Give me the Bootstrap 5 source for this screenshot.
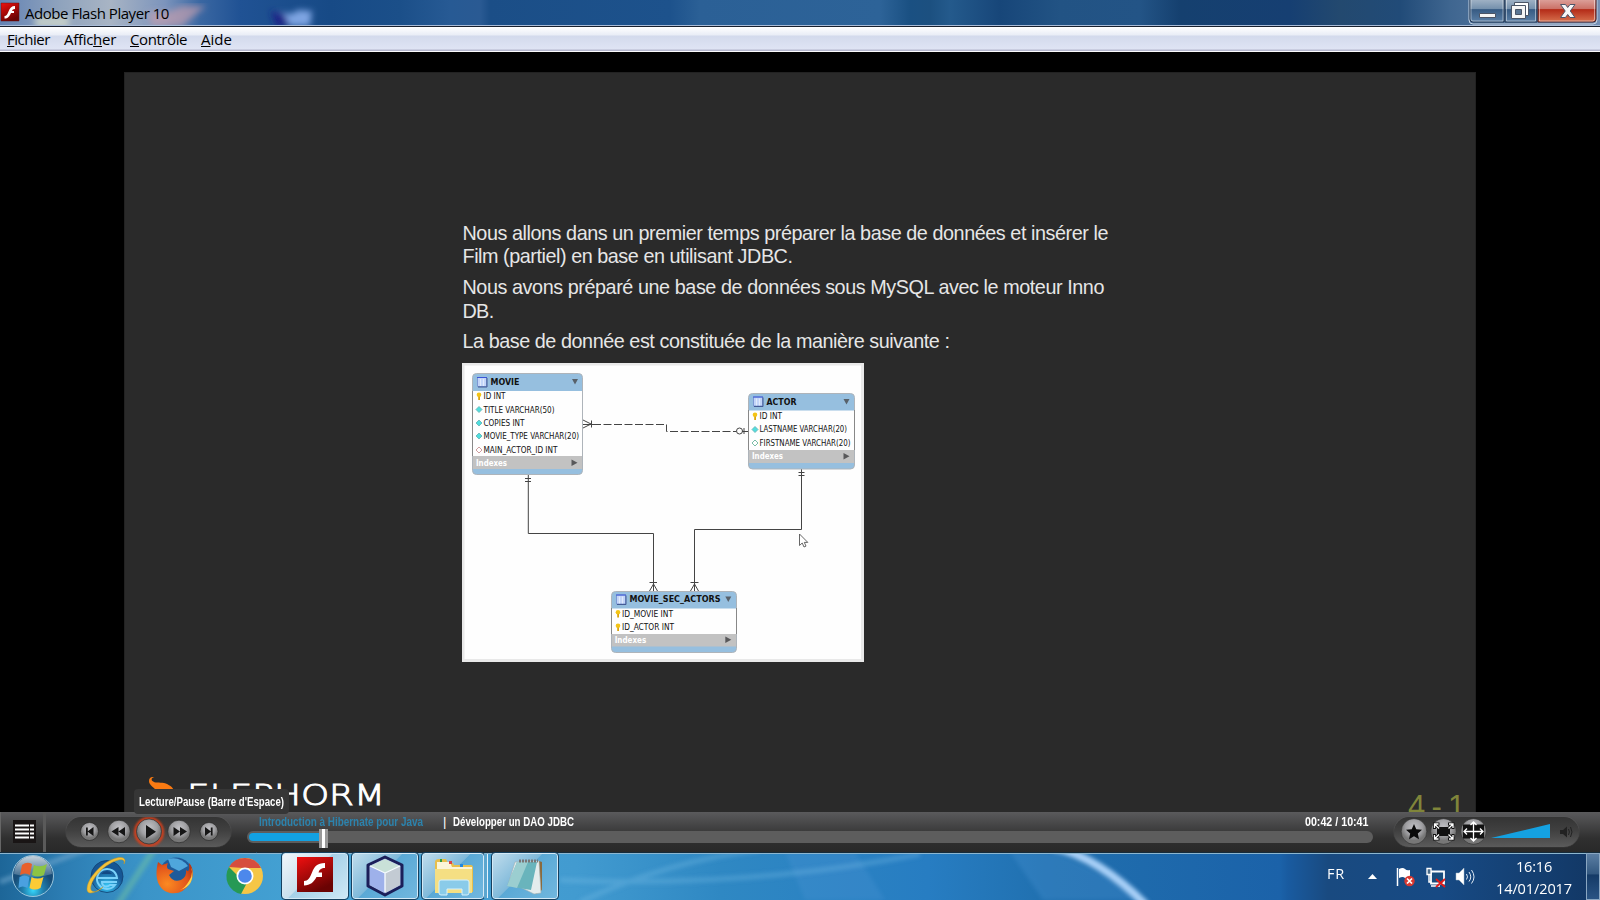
<!DOCTYPE html>
<html lang="fr">
<head>
<meta charset="utf-8">
<title>Adobe Flash Player 10</title>
<link href="https://cdn.jsdelivr.net/npm/bootstrap@5.3.0/dist/css/bootstrap.min.css" rel="stylesheet">
<style>
body{width:1600px;height:900px;overflow:hidden;background:#000;font-family:"Open Sans","Noto Sans",sans-serif;color:#000}
svg{display:block;flex:none}
.fit{white-space:nowrap;display:inline-block;flex:none}
.titlebar{height:27px;background:linear-gradient(90deg,#6483b4 0,#8fa3bd 60px,#a8b4c4 110px,#7c94bc 165px,#3a67a2 200px,#205294 240px,#174a86 330px,#1b4f89 400px,#275a94 450px,#2a5a93 480px,#1b4e87 490px,#1d528c 670px,#2b6096 700px,#2d6398 880px,#1a5082 910px,#1c5080 930px,#245a8c 950px,#174679 1000px,#225384 1060px,#235486 1140px,#15406f 1180px,#163f72 1290px,#23496f 1340px,#214b78 1400px,#3f6690 1450px,#7590b4 1600px);border-bottom:1px solid #18202e;box-shadow:inset 0 -1px #a9bcd8;font-size:15px;line-height:26px}
.menubar{height:25px;font-size:15px;line-height:24px;background:linear-gradient(#fff 0,#e9edf6 8px,#d3daec 9px,#dfe4f4 22px,#b5b7cd 23px,#b5b7cd 24px,#fafafc 24px)}
.stage{height:760px;padding:20px 124px 0}
.slide{background:#2a2a2a;border:1px solid #222;border-bottom:0;color:#e6e6e6;width:1352px}
.copy{margin:148.500px 0 0 337.500px;width:660px;font:19.800px/23.700px "Liberation Sans",Arial,sans-serif}
.copy p{margin:0 0 7px}
.brand{left:20px;bottom:0}
.pageno{right:11px;bottom:-12px;color:#80853a;font:31px/34px "Liberation Sans",sans-serif}
.narrow{font-family:"Liberation Sans",Arial,sans-serif;font-weight:700;font-size:13px}
.narrow .fit{transform-origin:0 50%}
.tip{left:134px;top:789px;width:155px;height:25px;background:#363636;border-radius:4px;color:#fff;padding:0 5px;line-height:25px;z-index:5}
.player{height:40px;background:linear-gradient(#5a5a5c,#4a4a4b 10px,#303030 26px,#292929)}
.listbox{width:46px;border-left:1px solid #666;border-right:3px solid #5a5a5a}
.pill{border-radius:15px;height:30px;background:linear-gradient(#343434,#404040 45%,#5b5b5b);box-shadow:0 0 1px #777}
.track{height:12px;border-radius:6px;background:#5d5d5d;width:1126px}
.done{height:8px;border-radius:4px 0 0 4px;background:#12a1e2}
.knob{width:9px;height:19px;top:-2px;background:linear-gradient(90deg,#999 0 3px,#fff 3px 6px,#999 6px)}
.taskbar{height:48px;color:#fff}
.task{width:66px;height:46px;border:1px solid #d4e9f6;outline:1px solid #16405f;outline-offset:0;border-radius:3px;background:linear-gradient(135deg,#bfdcec 0,#7fb9da 45%,#5aa9d6 46%,#71b7de)}
.task.on{background:linear-gradient(135deg,#f1f6fa,#c9e0ee 45%,#a5d0e8 46%,#cfe8f5)}
.peek{width:14px;height:47px;border:1px solid #8aa7c2;background:linear-gradient(#5b7ea3,#31577f 45%,#143a66 46%,#2a5484)}
</style>
</head>
<body class="d-flex flex-column m-0">
<header class="titlebar d-flex position-relative flex-shrink-0">
  <svg class="position-absolute top-0 start-0" width="400" height="25"><defs><filter id="soft"><feGaussianBlur stdDeviation="3"/></filter></defs><g filter="url(#soft)"><path d="M148 12l20 0 14-6h24l-24 20h-30z" fill="#c99fae" opacity=".65"/><path d="M276 12l6 14h28l2-15-14-1-6 4z" fill="#7ea4e2"/><path d="M271 11l5 15h14l-6-12z" fill="#1a2386"/><path d="M35 16h34v12h-34z" fill="#cfd8cc" opacity=".8"/></g></svg>
  <svg class="position-relative" width="20" height="26" viewBox="0 0 20 26"><defs><linearGradient id="red" x1="0" y1="0" x2=".5" y2="1"><stop stop-color="#f01010"/><stop offset="1" stop-color="#6a0303"/></linearGradient></defs><path d="M1 3h18v18H1z" fill="url(#red)" stroke="#601414" stroke-width=".5"/><path d="M15 6v3c-2 0-2.500.8-3 2h2v2h-3c-1.500 3.500-3 5.500-6.500 5.500v-2.500c2 0 3-1.800 4-4.500C9.700 8 11.500 6 15 6z" fill="#fff"/></svg>
  <span class="fit position-relative" style="margin-left:5px" data-w="144">Adobe Flash Player 10</span>
  <svg class="ms-auto" width="132" height="26" viewBox="1468 0 132 26"><defs><linearGradient id="g1" x2="0" y2="1"><stop stop-color="#a3b4c7"/><stop offset=".43" stop-color="#7490ac"/><stop offset=".46" stop-color="#375b83"/><stop offset="1" stop-color="#5a7fa6"/></linearGradient><linearGradient id="g2" x2="0" y2="1"><stop stop-color="#dda39d"/><stop offset=".43" stop-color="#cb7166"/><stop offset=".46" stop-color="#b42b18"/><stop offset="1" stop-color="#d7714e"/></linearGradient></defs>
  <path d="M1469-1v21q0 4 4 4h120q4 0 4-4V-1" fill="none" stroke="#c5d2e0"/><path d="M1470-1v20q0 3 3 3h31V-1zM1505-1v23h32V-1z" fill="url(#g1)" stroke="#263a55"/><path d="M1538-1v23h55q3 0 3-3V-1z" fill="url(#g2)" stroke="#4c2228"/>
  <path d="M1471 0v19q0 2 2 2h30V0M1506.500 0v21h29V0M1539.500 0v21h53q2 0 2-2V0" stroke="#fff" stroke-opacity=".45" fill="none"/>
  <path d="M1479.500 13.500h16v4h-16z" fill="#f5f5f5" stroke="#4b5566"/><path d="M1514.500 2.500h14v13h-14z" fill="#fff" stroke="#4b5566"/><path d="M1511.500 5.500h14v13h-14z" fill="#f5f5f5" stroke="#4b5566"/><path d="M1515.500 9.500h6v5h-6z" fill="#5a7592" stroke="#4b5566"/><path d="M1560.500 4.500h5l2.200 3 2.300-3h5l-4.700 6.500 4.700 6.500h-5l-2.300-3-2.200 3h-5l4.700-6.500z" fill="#f7f7f7" stroke="#4e5468"/></svg>
</header>
<nav class="menubar position-relative flex-shrink-0 d-flex" style="padding-left:7px">
  <span class="fit" style="width:57px" data-w="43"><u>F</u>ichier</span><span class="fit" style="width:66px" data-w="52">Affic<u>h</u>er</span><span class="fit" style="width:71px" data-w="57"><u>C</u>ontrôle</span><span class="fit" data-w="31"><u>A</u>ide</span>
</nav>
<main class="stage d-flex flex-shrink-0">
 <section class="slide position-relative overflow-hidden">
  <div class="copy">
   <p><span class="fit" data-w="645.5">Nous allons dans un premier temps préparer la base de données et insérer le</span><br><span class="fit" data-w="330">Film (partiel) en base en utilisant JDBC.</span></p>
   <p><span class="fit" data-w="641.5">Nous avons préparé une base de données sous MySQL avec le moteur Inno</span><br><span class="fit" data-w="31">DB.</span></p>
   <p><span class="fit" data-w="487">La base de donnée est constituée de la manière suivante :</span></p>
   <svg style="margin:9px 0 0 -.5px" width="402" height="299" viewBox="462 363 402 299" font-family="'DejaVu Sans Condensed','DejaVu Sans',sans-serif" font-size="8" fill="#111">
    <defs>
     <g id="grid"><path d="M.5.5h9v9h-9z" fill="#c3d5f8" stroke="#7d98d4"/><path d="M0 .5h10" stroke="#3a55d8"/><path d="M3.500 2v7M6.500 2v7" stroke="#fff" stroke-opacity=".5"/><path d="M10 1v9H1" fill="none" stroke="#445a94"/></g>
     <g id="key"><circle cx="2.500" cy="2.300" r="2.300" fill="#f4c414"/><path d="M1.700 4h1.800v3.500h-1.800z" fill="#dca60c"/></g>
     <path id="dia" d="M3 0l3 3-3 3-3-3z" stroke-width=".9"/>
     <path id="dn" d="M0 0h6L3 5.500z" fill="#58616a"/><path id="rt" d="M0 0v6.500l6-3.250z" fill="#58585a"/>
    </defs>
    <path d="M462 363h402v299H462z" fill="#e9e9e9"/><path d="M464.500 365.500h396.500v293.500H464.500z" fill="#fefefe"/>
    <g fill="none" stroke="#444">
     <path d="M528.300 475v58.500h125.200V591M801.500 469v60.500h-107V591"/><path d="M525 478.500h6M525 481.500h6M798.500 472.500h6M798.500 475.500h6"/>
     <path d="M649.500 582.500h7.500M649.500 591l4-7 4 7M690.500 582.500h8M690.500 591l4-7 4 7M583 420l8 4-8 4M591.500 420.500v7"/>
     <path d="M583 424.500h10"/><path d="M593 424.500h73.500v7H736" stroke-dasharray="8 2.500"/><circle cx="739.500" cy="431" r="3"/><path d="M744 428v6M742 431.500h6"/>
    </g>
    <g stroke="#aeb4ba"><rect x="472.500" y="373.500" width="110" height="101" rx="4" fill="#96bfdf"/><rect x="748.500" y="393.500" width="106" height="75.500" rx="4" fill="#96bfdf"/><rect x="611.500" y="591.500" width="125" height="61" rx="4" fill="#96bfdf"/></g>
    <g fill="#fefefe"><path d="M473 391h109v65H473zM749 410.500h105V450H749zM612 608.500h124V634H612z"/></g>
    <g fill="#c2c2c2"><path d="M473 456h109v13H473zM749 450h105v13H749zM612 634h124v12.500H612z"/></g>
    <g stroke="#888" fill="none"><path d="M472.500 391v65M748.500 410v40M854.500 410v40M611.500 608v26M736.500 608v26"/></g>
    <use href="#grid" x="477" y="377"/><use href="#grid" x="753" y="396.500"/><use href="#grid" x="616" y="594.500"/>
    <use href="#dn" x="572" y="379"/><use href="#dn" x="843.500" y="399"/><use href="#dn" x="725.300" y="596.500"/>
    <use href="#rt" x="571.500" y="459.500"/><use href="#rt" x="843.500" y="453"/><use href="#rt" x="725.300" y="636.500"/>
    <use href="#key" x="476.500" y="392.500"/><use href="#key" x="752.500" y="412.500"/><use href="#key" x="615.500" y="610"/><use href="#key" x="615.500" y="623.500"/>
    <g fill="#4fdede" stroke="#6ab5b8"><use href="#dia" x="476" y="406.500"/><use href="#dia" x="476" y="420"/><use href="#dia" x="476" y="433"/><use href="#dia" x="752" y="426.500"/></g>
    <use href="#dia" x="476" y="447" fill="#fff" stroke="#c99294"/><use href="#dia" x="752" y="440" fill="#fff" stroke="#6ab59c"/>
    <g><g font-weight="700" font-size="8.500"><text x="490.500" y="385.300" textLength="29">MOVIE</text><text x="766.500" y="404.800" textLength="30">ACTOR</text><text x="629.500" y="602.300" textLength="91">MOVIE_SEC_ACTORS</text></g>
    <text x="483.500" y="399.200" textLength="22">ID INT</text><text x="483.500" y="412.500" textLength="71">TITLE VARCHAR(50)</text><text x="483.500" y="426" textLength="41">COPIES INT</text><text x="483.500" y="439" textLength="95.500">MOVIE_TYPE VARCHAR(20)</text><text x="483.500" y="452.800" textLength="74">MAIN_ACTOR_ID INT</text>
    <text x="759.500" y="419" textLength="22.500">ID INT</text><text x="759.500" y="432" textLength="87.500">LASTNAME VARCHAR(20)</text><text x="759.500" y="445.800" textLength="91">FIRSTNAME VARCHAR(20)</text>
    <text x="622" y="617" textLength="51">ID_MOVIE INT</text><text x="622" y="630.300" textLength="52">ID_ACTOR INT</text>
    <g fill="#fff" font-weight="700"><text x="476" y="465.600" textLength="31">Indexes</text><text x="752" y="459.200" textLength="31">Indexes</text><text x="614.700" y="643" textLength="31.500">Indexes</text></g></g>
    <path d="M799.500 534v11.500l2.700-2.500 1.800 4 2-.9-1.700-3.700h3.500z" fill="#fff" stroke="#555" stroke-width=".9"/>
   </svg>
  </div>
  <svg class="brand position-absolute" width="250" height="40" viewBox="145 772 250 40"><path d="M149 781c0-3.500 3-5 5.500-3.500-2.500-.3-3.500 1.500-2.500 3.200 3 2.800 7 1.300 12 2.300 5 1.500 9 4 10 8h-18c-1-4-7-5-7-10z" fill="#f97a12"/><text x="187" y="805" font-family="'DejaVu Sans Light','DejaVu Sans ExtraLight','DejaVu Sans',sans-serif" font-weight="200" font-size="27.500" fill="#fff" stroke="#fff" stroke-width=".9" textLength="198">ELEPHORM</text></svg>
  <div class="pageno position-absolute"><span class="fit" data-w="56">4 - 1</span></div>
 </section>
</main>
<div class="tip position-absolute narrow"><span class="fit" data-w="145">Lecture/Pause (Barre d'Espace)</span></div>
<footer class="player d-flex flex-shrink-0">
  <div class="listbox d-flex align-items-center" style="padding:0 0 1px 12px"><svg width="23" height="23"><path d="M0 0h23v23H0z" fill="#191515"/><path d="M2 5.500h14M2 9.500h14M2 13.500h14M2 17.500h14M17 5.500h4M17 9.500h4M17 13.500h4M17 17.500h4" stroke="#fff" stroke-width="2"/></svg></div>
  <div class="pill" style="width:165px;margin:5px 16px 0 20px"><svg width="165" height="30" viewBox="66 817 165 30"><defs><radialGradient id="btn" cy=".35"><stop stop-color="#c2c2c6"/><stop offset=".65" stop-color="#a0a0a3"/><stop offset="1" stop-color="#777"/></radialGradient><filter id="glow" x="-.4" y="-.4" width="1.800" height="1.800"><feGaussianBlur stdDeviation="1"/></filter></defs>
   <circle cx="149" cy="832" r="13.500" fill="none" stroke="#d8401a" stroke-width="3" filter="url(#glow)"/>
   <g fill="url(#btn)" stroke="#222" stroke-width=".6"><circle cx="89.500" cy="831.500" r="9"/><circle cx="119" cy="831.500" r="11.300"/><circle cx="149" cy="831.500" r="12.500"/><circle cx="179" cy="831.500" r="11.300"/><circle cx="209" cy="831.500" r="9"/></g>
   <g fill="#161616"><path d="M86 827.500h1.800v8H86zM93.500 827v9l-6-4.500zM118.500 827v9l-7-4.500zM125 827v9l-6.500-4.500zM146 825v13.500l10-6.700zM173.500 827v9l6.500-4.500zM180 827v9l7-4.500zM205 827v9l6-4.500zM210.800 827.500h1.800v8h-1.800z"/></g></svg></div>
  <div style="width:1126px">
   <div class="narrow d-flex text-white" style="height:19px;line-height:20px;padding-left:12px"><div style="width:184px"><span class="fit" style="color:#2c83ad" data-w="164">Introduction à Hibernate pour Java</span></div><div class="fw-normal" style="width:10px">|</div><div><span class="fit" data-w="121">Développer un DAO JDBC</span></div><div class="position-absolute" style="left:1305px"><span class="fit" data-w="63.5">00:42 / 10:41</span></div></div>
   <div class="track position-relative d-flex align-items-center"><div class="done" style="width:76px;margin-left:2px"></div><div class="knob position-absolute" style="left:72px"></div></div>
  </div>
  <div class="pill" style="width:185px;margin:5px 0 0 21px"><svg width="185" height="30" viewBox="1394 817 185 30"><g fill="url(#btn)" stroke="#222" stroke-width=".5"><circle cx="1414" cy="831.500" r="12.800"/><circle cx="1443.500" cy="831.500" r="12.800"/><circle cx="1473.500" cy="831.500" r="12.800"/></g>
   <path d="M1414 824l2.300 5.200 5.700.6-4.200 3.800 1.200 5.600-5-2.900-5 2.900 1.200-5.600-4.200-3.800 5.700-.6z" fill="#0a0a0a"/><path d="M1437 827h13v9h-13zM1463 824.500h21v14h-21z" fill="#111"/>
   <g fill="none" stroke="#111" stroke-width="3"><path d="M1434.500 829v-5h5M1434.500 824l5 5M1453 829v-5h-5M1453 824l-5 5M1434.500 834v5h5M1434.500 839l5-5M1453 834v5h-5M1453 839l-5-5"/></g>
   <g fill="none" stroke="#fff" stroke-width="1.300"><path d="M1434.500 828v-4h4M1434.500 824l4.500 4.500M1453 828v-4h-4M1453 824l-4.500 4.500M1434.500 835v4h4M1434.500 839l4.500-4.500M1453 835v4h-4M1453 839l-4.500-4.500"/><path d="M1464 831.500h19M1473.500 822v19M1467 828.500l-3 3 3 3M1480 828.500l3 3-3 3M1470.500 825l3-3 3 3M1470.500 838l3 3 3-3"/></g>
   <path d="M1491 838l59-14v14z" fill="#14a1e1"/><path d="M1560 830h3l4-3.500v11l-4-3.500h-3z" fill="#222"/><path d="M1568.500 829q1.800 3 0 6M1570.500 827q3 5 0 10" fill="none" stroke="#222"/></svg></div>
</footer>
<div class="taskbar position-relative flex-shrink-0">
 <svg class="position-absolute top-0 start-0" width="1600" height="48"><defs><linearGradient id="tb"><stop stop-color="#1d6698"/><stop offset=".04" stop-color="#2c7db3"/><stop offset=".09" stop-color="#3b94c8"/><stop offset=".2" stop-color="#45a3d5"/><stop offset=".36" stop-color="#429bd0"/><stop offset=".45" stop-color="#2f88c3"/><stop offset=".58" stop-color="#277dc2"/><stop offset=".66" stop-color="#206fae"/><stop offset=".8" stop-color="#1b62a9"/><stop offset=".805" stop-color="#195ba0"/><stop offset=".83" stop-color="#194a80"/><stop offset=".9" stop-color="#174a84"/><stop offset="1" stop-color="#123764"/></linearGradient><filter id="b2" x="-.2" y="-.5" width="1.400" height="2"><feGaussianBlur stdDeviation="2"/></filter></defs><path d="M0 0h1600v48H0z" fill="url(#tb)"/>
 <path d="M785 0h70l30 48h-80zM1010 0h45q50 20 85 48h-97z" fill="#4c94d4" opacity=".3" filter="url(#b2)"/><g filter="url(#b2)" fill="none"><path d="M0 30L90-4" stroke="#78acd0" stroke-width="5" opacity=".6"/><path d="M118 52L155-4" stroke="#75c5a0" stroke-width="6" opacity=".5"/><path d="M580 50q90-42 180-52M560 28q190 8 360-26" stroke="#80c2ec" stroke-width="5" opacity=".3"/><path d="M1053-5q45 10 93 58" stroke="#a9d0f8" stroke-width="8"/></g><path d="M0 .5h1600" stroke="#152c3c"/><path d="M0 1.500h1600" stroke="#8db6cf"/></svg>
 <div class="position-relative d-flex h-100 align-items-start" style="padding-top:1px">
  <svg width="282" height="47" viewBox="0 853 282 47"><defs><radialGradient id="orb" cy=".85"><stop stop-color="#35d5fa"/><stop offset=".5" stop-color="#207ead"/><stop offset="1" stop-color="#164c77"/></radialGradient><linearGradient id="orbtop" x2="0" y2="1"><stop stop-color="#fff" stop-opacity=".75"/><stop offset="1" stop-color="#fff" stop-opacity=".15"/></linearGradient><radialGradient id="ie" cy=".8"><stop stop-color="#37c8f6"/><stop offset="1" stop-color="#165694"/></radialGradient><radialGradient id="fx" cx=".3" cy=".7" r=".8"><stop stop-color="#fb8a22"/><stop offset=".7" stop-color="#e2541b"/><stop offset="1" stop-color="#b83614"/></radialGradient></defs>
   <circle cx="33" cy="876" r="20.500" fill="url(#orb)" stroke="#9bc6dc"/><path d="M14 874a19 18 0 0 1 38 0q-18 6-38 0z" fill="url(#orbtop)"/>
   <path d="M22 865q5-4 10-1l-2 11q-5-3-10 0z" fill="#e8602c"/><path d="M34 865q6 3 13-1l-3 11q-6 3-12 0z" fill="#8cc444"/><path d="M19.500 877q5-3 10 0l-2 11q-5-3-9 0z" fill="#4aa0e0"/><path d="M31.500 877q6 3 12 0l-3 11q-6 3-11 0z" fill="#fccb36"/>
   <circle cx="107" cy="876.500" r="16" fill="url(#ie)" stroke="#123f70" stroke-width=".8"/><path d="M98 878h19a10 10 0 1 0-2 7h-5c-4 3-8 1-8-3h15" fill="none" stroke="#7ad2fa" stroke-width="2"/><path d="M101 874q6-6 11 0z" fill="#134984"/><path d="M124 864c2-7-8-5-18 2-12 9-18 22-14 25 3 2 7 0 11-4-9 7-16 8-16 2 0-8 8-18 17-25 10-7 21-9 21-3z" fill="#f4c33a" stroke="#c99623" stroke-width=".5"/>
   <circle cx="176" cy="874" r="16.500" fill="#1f5b9a"/><path d="M168 859q12-3 20 7l-9 5-8-4z" fill="#4fa6dc"/><path d="M158 862l4 3 6-2q-2 4 0 6l6 2-5 4q4 8 12 5 6-3 5-10 4 4 3-7c5 5 5 14 1 20q-7 12-20 10c-12-3-16-15-12-31z" fill="url(#fx)"/><path d="M189 863q6 9 0 18-4 7-9 9 15-4 12-21z" fill="#fdd04c"/>
   <circle cx="245" cy="876" r="18" fill="#f5c646"/><path d="M229 867a18 18 0 0 0 12 27l8-15h-8z" fill="#269955"/><path d="M229 867q5-9 16-9t16 10h-18z" fill="#d64d3e"/><circle cx="245" cy="876" r="8.500" fill="#fff"/><circle cx="245" cy="876" r="6.800" fill="#4c88ec"/></svg>
  <div class="task on d-flex justify-content-center" style="padding-top:2px;margin-right:4px"><svg width="36" height="36"><path d="M0 1h36v35H0z" fill="url(#red)"/><path d="M28 7v5c-4 0-5.500 1.500-6.500 4.500h3.500v4.500h-5.500c-3 5.500-6 8-12.500 8.500v-4.500c4 0 6-3.500 8-8.500 2.500-6 5-9.500 13-9.500z" fill="#fff"/></svg></div>
  <div class="task d-flex justify-content-center" style="padding-top:1px;margin-right:4px"><svg width="40" height="42"><path d="M20 2l17 8v21L20 40 3 31V10z" fill="#a8b8e0" stroke="#1b1f59" stroke-width="3" stroke-linejoin="round"/><path d="M20 4l15 7-15 7L5 11z" fill="#c9e1d8"/><path d="M20 18l15-7v19l-15 8z" fill="#c3cbd3"/><path d="M5 11l15 7v20L5 30z" fill="#9eb1ea"/><path d="M20 18v19M20 18l15-7M20 18L5 11" stroke="#f7fcff" stroke-width="1.300"/></svg></div>
  <div class="task d-flex position-relative justify-content-center" style="width:62px;margin-right:4px;padding-top:3px"><svg width="40" height="40"><path d="M2 35V5q0-3 4-3h7l2 4h5l1 2h17q2 0 2 3v24z" fill="#e7bf4c"/><path d="M4 5h13l2 5h20v4H4z" fill="#fbf5d8"/><path d="M7 2h2v3H7z" fill="#2d9b43"/><path d="M16 4h3v3h-3z" fill="#d44"/><path d="M27 7h3v3h-3z" fill="#28d"/><path d="M2 12h37v24H2z" fill="#f5df83"/><path d="M6 25q0-2 2-2h26q2 0 2 2v11q0 2-2 2h-5v-6H14v6H8q-2 0-2-2z" fill="#8acbe9" stroke="#d7f1fb"/></svg><span class="position-absolute" style="left:61px;top:0;width:4px;height:44px;border-right:1px solid #e4f3fc;background:#5ba6cf"></span></div>
  <div class="task d-flex justify-content-center" style="padding-top:3px;margin-left:4px"><svg width="40" height="40"><path d="M34 4l3 1v28l-6 4z" fill="#8a6a3d"/><path d="M10 5l24-1 2 32-7 1-12-6-14-3z" fill="#e4eced" stroke="#a0b0b4" stroke-width=".6"/><path d="M12 5h20l-6 28-24-4z" fill="#69b4bc"/><path d="M12 5h11L12 31 2 29z" fill="#a8d5d5" opacity=".8"/><path d="M14 4h19" stroke="#777" stroke-width="3" stroke-dasharray="2 1"/></svg></div>
  <div class="d-flex ms-auto align-items-start"><span class="fit" style="font-size:14.5px;line-height:22px;margin:10px 23px 0 0;width:18px" data-w="18">FR</span>
   <svg width="110" height="47" viewBox="1368 853 110 47"><path d="M1368 879h9l-4.500-5z" fill="#fff"/><path d="M1397.500 868v18" stroke="#fff" stroke-width="1.500"/><path d="M1399 869q4-2 6 0t5 1v9q-3 1-5-1t-6 0z" fill="#fff"/><circle cx="1409.500" cy="881" r="5.200" fill="#d93830"/><path d="M1407 878.500l5 5M1412 878.500l-5 5" stroke="#fff" stroke-width="1.700"/>
   <path d="M1431 871.500h13v12h-13z" fill="#184c7d" stroke="#fff" stroke-width="1.800"/><path d="M1427 868.500h4v6h-4z" fill="#496b8a" stroke="#fff" stroke-width="1.300"/><path d="M1429 875v7h2M1431 886h9" stroke="#fff" stroke-width="1.500" fill="none"/><path d="M1436 879l9 8M1445 879l-9 8" stroke="#e11a18" stroke-width="1.800"/>
   <path d="M1456 873h3l5-5v17l-5-5h-3z" fill="#fff" stroke="#a6b8c9" stroke-width=".5"/><path d="M1466.500 874q2 3 0 5.500M1469 872q3.500 5 0 9.500M1471.500 870q5 7 0 13.500" fill="none" stroke="#e3edf6" stroke-width="1"/></svg>
   <div class="text-center" style="width:76px;font-size:14.500px;line-height:22px;margin:3px 14px 0 18px"><div><span class="fit" data-w="36">16:16</span></div><div><span class="fit" data-w="76">14/01/2017</span></div></div>
   <div class="peek"></div></div>
 </div>
</div>
<script src="https://cdn.jsdelivr.net/npm/bootstrap@5.3.0/dist/js/bootstrap.bundle.min.js"></script>
<script>
// Space each label so that it fills its set width; the condensed ones are squeezed instead.
document.querySelectorAll('.fit').forEach(el => {
  const r = document.createRange(); r.selectNodeContents(el);
  const n = r.getBoundingClientRect().width;
  if (el.closest('.narrow')) el.style.transform = 'scaleX(' + el.dataset.w / n + ')';
  else el.style.letterSpacing = ((el.dataset.w - n) / el.textContent.length) + 'px';
});
// SVG labels stretch the letters as well as the gaps.
document.querySelectorAll('svg text').forEach(t => t.setAttribute('lengthAdjust', 'spacingAndGlyphs'));
</script>
</body>
</html>
